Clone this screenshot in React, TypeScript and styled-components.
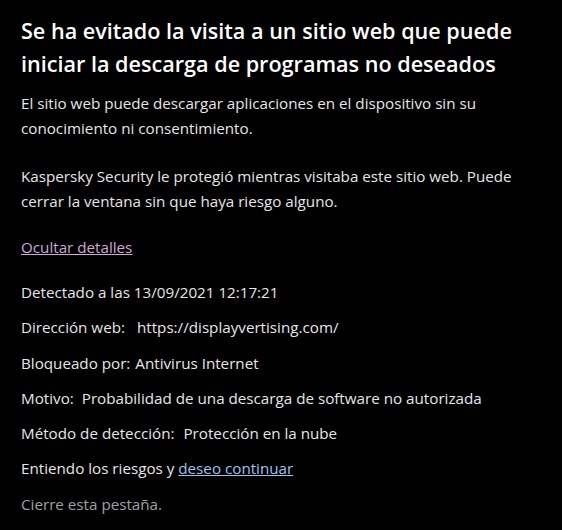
import React from "react"
import styled, { createGlobalStyle } from "styled-components"

const GlobalStyle = createGlobalStyle`
  html, body {
    margin: 0;
    padding: 0;
    background: #000;
  }
`

interface Detail {
  label: string
  value: string
  gap: number
}

const details: Detail[] = [
  { label: "Dirección web:", value: "https://displayvertising.com/", gap: 12 },
  { label: "Bloqueado por:", value: "Antivirus Internet", gap: 5 },
  { label: "Motivo:", value: "Probabilidad de una descarga de software no autorizada", gap: 8 },
  { label: "Método de detección:", value: "Protección en la nube", gap: 9 }
]

export default function App() {
  return (
    <Page>
      <GlobalStyle />
      <Title>Se ha evitado la visita a un sitio web que puede iniciar la descarga de programas no deseados</Title>
      <Paragraph>
        El sitio web puede descargar aplicaciones en el dispositivo sin su conocimiento ni consentimiento.
      </Paragraph>
      <Paragraph>
        Kaspersky Security le protegió mientras visitaba este sitio web. Puede cerrar la ventana sin que haya
        riesgo alguno.
      </Paragraph>
      <Paragraph>
        <Link tone="visited" href="#">Ocultar detalles</Link>
      </Paragraph>
      <Details>
        <Row>Detectado a las 13/09/2021 12:17:21</Row>
        {details.map(d => (
          <Row key={d.label}>
            {d.label}
            <Value gap={d.gap}>{d.value}</Value>
          </Row>
        ))}
        <Row>
          Entiendo los riesgos y <Link tone="normal" href="#">deseo continuar</Link>
        </Row>
        <Row muted>Cierre esta pestaña.</Row>
      </Details>
    </Page>
  )
}

const Page = styled.div`
  width: 562px;
  height: 530px;
  box-sizing: border-box;
  padding: 14px 21px 0;
  background: #000;
  color: #e6e6e6;
  font-family: "Open Sans", "Noto Sans", sans-serif;
  font-size: 15.2px;
  overflow: hidden;
`

const Title = styled.h1`
  margin: 0 0 11px;
  font-size: 21.6px;
  font-weight: 600;
  line-height: 33px;
  color: #fff;
`

const Paragraph = styled.p`
  margin: 0 0 21px;
  line-height: 25px;

  &:first-of-type {
    margin-bottom: 23px;
  }
`

const Link = styled.a<{ tone: "visited" | "normal" }>`
  color: ${p => (p.tone === "visited" ? "#d6a4dc" : "#9cc4ea")};
  text-decoration: underline;
`

const Details = styled.div`
  display: flex;
  flex-direction: column;
  margin-top: -6px;
`

const Row = styled.div<{ muted?: boolean }>`
  line-height: 35.3px;
  color: ${p => (p.muted ? "#a0a0a0" : "#e6e6e6")};
`

const Value = styled.span<{ gap: number }>`
  margin-left: ${p => p.gap}px;
`
